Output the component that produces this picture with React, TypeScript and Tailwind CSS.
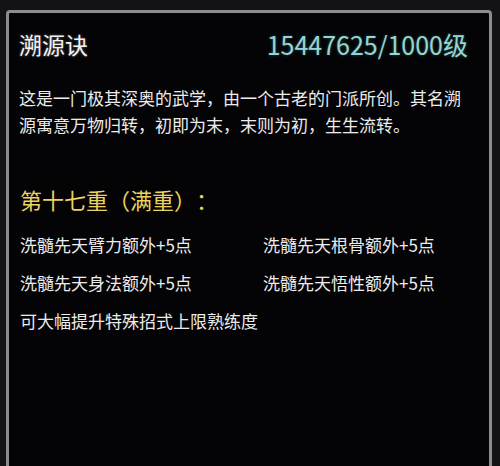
export default function App() {
    const items = [
        '洗髓先天臂力额外+5点',
        '洗髓先天根骨额外+5点',
        '洗髓先天身法额外+5点',
        '洗髓先天悟性额外+5点',
    ];

    return (
        <div
            className="h-[466px] w-[500px] overflow-hidden bg-[#131315] pt-[10px] pl-[6px] pr-[8px] [text-spacing-trim:space-all]"
            style={{ fontFamily: '"Noto Sans CJK SC", "Noto Sans", sans-serif' }}
        >
            <div className="h-[480px] rounded-[4px] border-[3px] border-[#8c8c8c] bg-[#040406] pl-[10px] pr-[21px] pt-[15px]">
                {/* Header */}
                <div className="flex items-center justify-between h-[32px]">
                    <span className="text-[23px] leading-[32px] text-[#f2f2f2] [text-shadow:0_0_3px_rgba(255,255,255,0.35)]">
                        溯源诀
                    </span>
                    <span className="text-[25px] leading-[32px] text-[#93d6d4] [text-shadow:0_0_3px_rgba(120,220,220,0.35)]">
                        15447625/1000级
                    </span>
                </div>

                {/* Description */}
                <p className="mt-[24px] text-[17px] leading-[27px] text-[#ececec]">
                    这是一门极其深奥的武学，由一个古老的门派所创。其名溯源寓意万物归转，初即为末，末则为初，生生流转。
                </p>

                {/* Level heading */}
                <div className="mt-[47px] pl-[1px] text-[22px] leading-[28px] text-[#ecd25e]">
                    第十七重（满重）：
                </div>

                {/* Bonuses */}
                <div className="mt-[20px] grid grid-cols-[243px_1fr] gap-y-[14px] pl-[1px] text-[17px] leading-[24px] text-[#ececec]">
                    {items.map(item => (
                        <div key={item}>{item}</div>
                    ))}
                    <div className="col-span-2">可大幅提升特殊招式上限熟练度</div>
                </div>
            </div>
        </div>
    );
}
